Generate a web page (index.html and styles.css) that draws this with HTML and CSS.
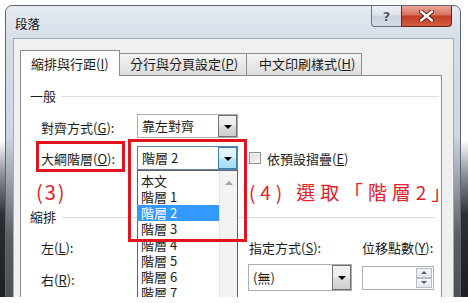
FILE: index.html
```html
<!DOCTYPE html>
<html lang="zh-Hant">
<head>
<meta charset="utf-8">
<title>段落</title>
<link rel="stylesheet" href="styles.css">
</head>
<body>
<div class="screen">
  <div class="window">
    <div class="titlebar">
      <span class="title">段落</span>
      <div class="caption">
        <div class="cap-btn help">?</div>
        <div class="cap-btn close">
          <svg width="15" height="12" viewBox="0 0 15 12"><path d="M2 1.5 L13 10.5 M13 1.5 L2 10.5" stroke="#5a1a10" stroke-width="4.2" stroke-linecap="round"/><path d="M2 1.5 L13 10.5 M13 1.5 L2 10.5" stroke="#fff" stroke-width="2.4" stroke-linecap="round"/></svg>
        </div>
      </div>
    </div>
    <div class="client">
      <div class="tabs">
        <div class="tab active">縮排與行距(<u>I</u>)</div>
        <div class="tab t2">分行與分頁設定(<u>P</u>)</div>
        <div class="tab t3">中文印刷樣式(<u>H</u>)</div>
      </div>
      <div class="panel">
        <div class="group"><span>一般</span><span class="rule"></span></div>
        <div class="row r1">
          <span class="lbl">對齊方式(<u>G</u>):</span>
          <div class="combo"><span class="val">靠左對齊</span><span class="dd"><i class="tri"></i></span></div>
        </div>
        <div class="row r2">
          <span class="lbl">大綱階層(<u>O</u>):</span>
          <div class="combo focus"><span class="val">階層 2</span><span class="dd hot"><i class="tri"></i></span>
            <div class="droplist">
              <div class="item">本文</div>
              <div class="item">階層 1</div>
              <div class="item sel">階層 2</div>
              <div class="item">階層 3</div>
              <div class="item">階層 4</div>
              <div class="item">階層 5</div>
              <div class="item">階層 6</div>
              <div class="item">階層 7</div>
              <div class="scroll"><i class="up"></i></div>
            </div>
          </div>
          <span class="check"></span><span class="chk-lbl">依預設摺疊(<u>E</u>)</span>
        </div>
        <div class="row note">
          <span class="n3">(3)</span><span class="n4">(4) 選取「階層2」</span>
        </div>
        <div class="group g2"><span>縮排</span><span class="rule"></span></div>
        <div class="row r3">
          <span class="c1">左(<u>L</u>):</span>
          <span class="c2">指定方式(<u>S</u>):</span>
          <span class="c3">位移點數(<u>Y</u>):</span>
        </div>
        <div class="row r4">
          <span class="c1b">右(<u>R</u>):</span>
          <div class="combo wide"><span class="val">(無)</span><span class="dd"><i class="tri"></i></span></div>
          <div class="spin"><span class="spin-btns"><span class="sb"><i class="sup"></i></span><span class="sb"><i class="sdn"></i></span></span></div>
        </div>
        <div class="redbox b1"></div>
        <div class="redbox b2"></div>
      </div>
    </div>
  </div>
</div>
</body>
</html>
```
FILE: styles.css
```css
* { box-sizing: border-box; }
html, body { margin: 0; padding: 0; background: #fff; }
body {
  width: 468px; height: 303px; overflow: hidden;
  font-family: "Noto Sans CJK TC", "Noto Sans", sans-serif;
  font-size: 13px; color: #1b1b1b;
}
u { text-decoration: underline; text-underline-offset: 1px; }
.screen {
  height: 297px; overflow: hidden; position: relative;
  padding: 5px 0 0 5px;
  background: linear-gradient(#fff 0, #fff 140px, #8a8f96 175px, #2c2f33 215px, #1e1f22);
}
.window {
  width: 456px; height: 330px;
  border: 1px solid #5e6672;
  border-radius: 7px 7px 0 0;
  background: linear-gradient(#e6ebf1, #d5dde7 34px, #cdd6e1 130px, #8e959e 185px, #5a5f66 230px, #44484d);
  padding: 0 6px 0 7px;
}
.titlebar { height: 32px; display: flex; align-items: flex-start; }
.title { padding: 11px 0 0 2px; line-height: 13px; font-size: 12.5px; color: #111; }
.caption { margin-left: auto; margin-right: 2px; display: flex; }
.cap-btn {
  height: 21px; border: 1px solid #6b7480; border-top: none;
  display: flex; align-items: center; justify-content: center;
}
.help {
  width: 30px; border-radius: 0 0 0 4px; border-right: none;
  background: linear-gradient(#eef2f6, #dbe2ea 45%, #c9d3de 50%, #d3dce6);
  font-family: "DejaVu Sans", sans-serif; font-weight: bold; font-size: 13px;
  color: #4b5560; text-shadow: 0 0 2px #fff, 0 0 1px #fff;
}
.close {
  width: 51px; border-radius: 0 0 4px 0; border-color: #6a2417;
  background: linear-gradient(#eba89b, #d9705c 45%, #c13e25 50%, #d35a3e);
}
.client {
  height: 290px;
  background: #f0f0f0;
  border: 1px solid #a2abb7;
  padding: 11px 0 0 6px;
}
.tabs { display: flex; align-items: flex-end; height: 26px; position: relative; z-index: 1; margin-bottom: -1px; }
.tab {
  height: 22px; margin-bottom: 1px;
  border: 1px solid #898c95; border-bottom: none;
  background: linear-gradient(#f4f4f4, #e8e8e8 50%, #dcdcdc);
  padding-left: 10px; line-height: 19px; white-space: nowrap; color: #1b1b1b;
}
.tab.active { height: 26px; margin-bottom: 0; width: 100px; background: #fff; padding-top: 3px; }
.t2 { width: 127px; border-left: none; }
.t3 { width: 115px; border-left: none; padding-left: 12px; }
.panel {
  width: 422px; height: 260px;
  border: 1px solid #898c95; background: #fff;
  position: relative;
}
.group { display: flex; align-items: center; height: 16px; margin-top: 12px; padding-left: 9px; line-height: 16px; }
.group .rule { flex: 1; height: 1px; background: #d5dfe5; margin: 0 2px 0 6px; }
.g2 { margin-top: 7px; }
.g2 .rule { margin-right: 5px; }
.row { display: flex; align-items: center; padding-left: 20px; }
.lbl { width: 96px; white-space: nowrap; }
.r1 { margin-top: 10px; height: 24px; }
.r2 { margin-top: 8px; height: 24px; }
.r1 .lbl { padding-top: 2px; }
.combo {
  width: 101px; height: 24px;
  border: 1px solid #abadb3; background: #fff;
  display: flex; position: relative;
}
.combo .val { flex: 1; padding-left: 4px; line-height: 22px; white-space: nowrap; }
.dd {
  width: 19px; border: 1px solid #707070;
  background: linear-gradient(#f3f3f3, #ebebeb 50%, #dddddd 51%, #cfcfcf);
  display: flex; align-items: center; justify-content: center;
}
.dd.hot {
  border-color: #3c7fb1;
  background: linear-gradient(#eaf6fd, #d9f0fc 50%, #bee6fd 51%, #a7d9f5);
}
.focus { border-color: #5b83ad; }
.tri { width: 0; height: 0; border-left: 4px solid transparent; border-right: 4px solid transparent; border-top: 4px solid #000; margin-top: 1px; }
.droplist {
  position: absolute; left: -1px; top: 23px; width: 101px; height: 140px;
  border: 1px solid #646464; background: #fff; padding-top: 2px; z-index: 2;
}
.item { height: 16px; line-height: 16px; padding-left: 3px; width: 81px; white-space: nowrap; }
.item.sel { background: #3399ff; color: #fff; margin-left: -1px; padding-left: 4px; width: 82px; }
.scroll {
  position: absolute; right: 0; top: 0; bottom: 0; width: 18px;
  background: #f3f3f3; border-left: 1px solid #e3e3e3;
}
.scroll .up {
  position: absolute; left: 5px; top: 10px;
  width: 0; height: 0; border-left: 4px solid transparent; border-right: 4px solid transparent; border-bottom: 4px solid #a3a3a3;
}
.check {
  width: 12px; height: 12px; margin-left: 11px;
  border: 1px solid #8f8f8f;
  background: linear-gradient(135deg, #dcdcdc, #f6f6f6);
  box-shadow: inset 0 0 0 1px #f4f4f4;
}
.chk-lbl { margin-left: 6px; white-space: nowrap; }
.note { margin-top: 12px; height: 20px; padding-left: 15px; color: #e3202c; font-size: 19px; line-height: 20px; }
.n3 { width: 213px; flex-shrink: 0; letter-spacing: 2px; font-size: 20px; }
.n4 { flex-shrink: 0; letter-spacing: 4.9px; white-space: nowrap; }
.r3 { margin-top: 15px; height: 16px; line-height: 16px; }
.c1 { width: 208px; }
.c2 { width: 113px; white-space: nowrap; }
.c3 { white-space: nowrap; }
.r4 { margin-top: 8px; height: 27px; }
.c1b { width: 207px; padding-top: 3px; }
.combo.wide { width: 104px; height: 27px; }
.combo.wide .val { line-height: 25px; }
.spin {
  width: 72px; height: 24px; margin-left: 10px;
  border: 1px solid #abadb3; background: #fff;
  display: flex; justify-content: flex-end; padding: 1px;
}
.spin-btns { width: 16px; display: flex; flex-direction: column; gap: 0; }
.sb {
  flex: 1; border: 1px solid #b5bcc7;
  background: linear-gradient(#f5f7f9, #e3e7ec);
  display: flex; align-items: center; justify-content: center;
}
.sup { width: 0; height: 0; border-left: 3px solid transparent; border-right: 3px solid transparent; border-bottom: 3px solid #4b5d80; }
.sdn { width: 0; height: 0; border-left: 3px solid transparent; border-right: 3px solid transparent; border-top: 3px solid #4b5d80; }
.redbox { position: absolute; border: 3px solid #e2141e; z-index: 3; }
.b1 { left: 15px; top: 65px; width: 89px; height: 31px; }
.b2 { left: 107px; top: 63px; width: 119px; height: 103px; }
```
